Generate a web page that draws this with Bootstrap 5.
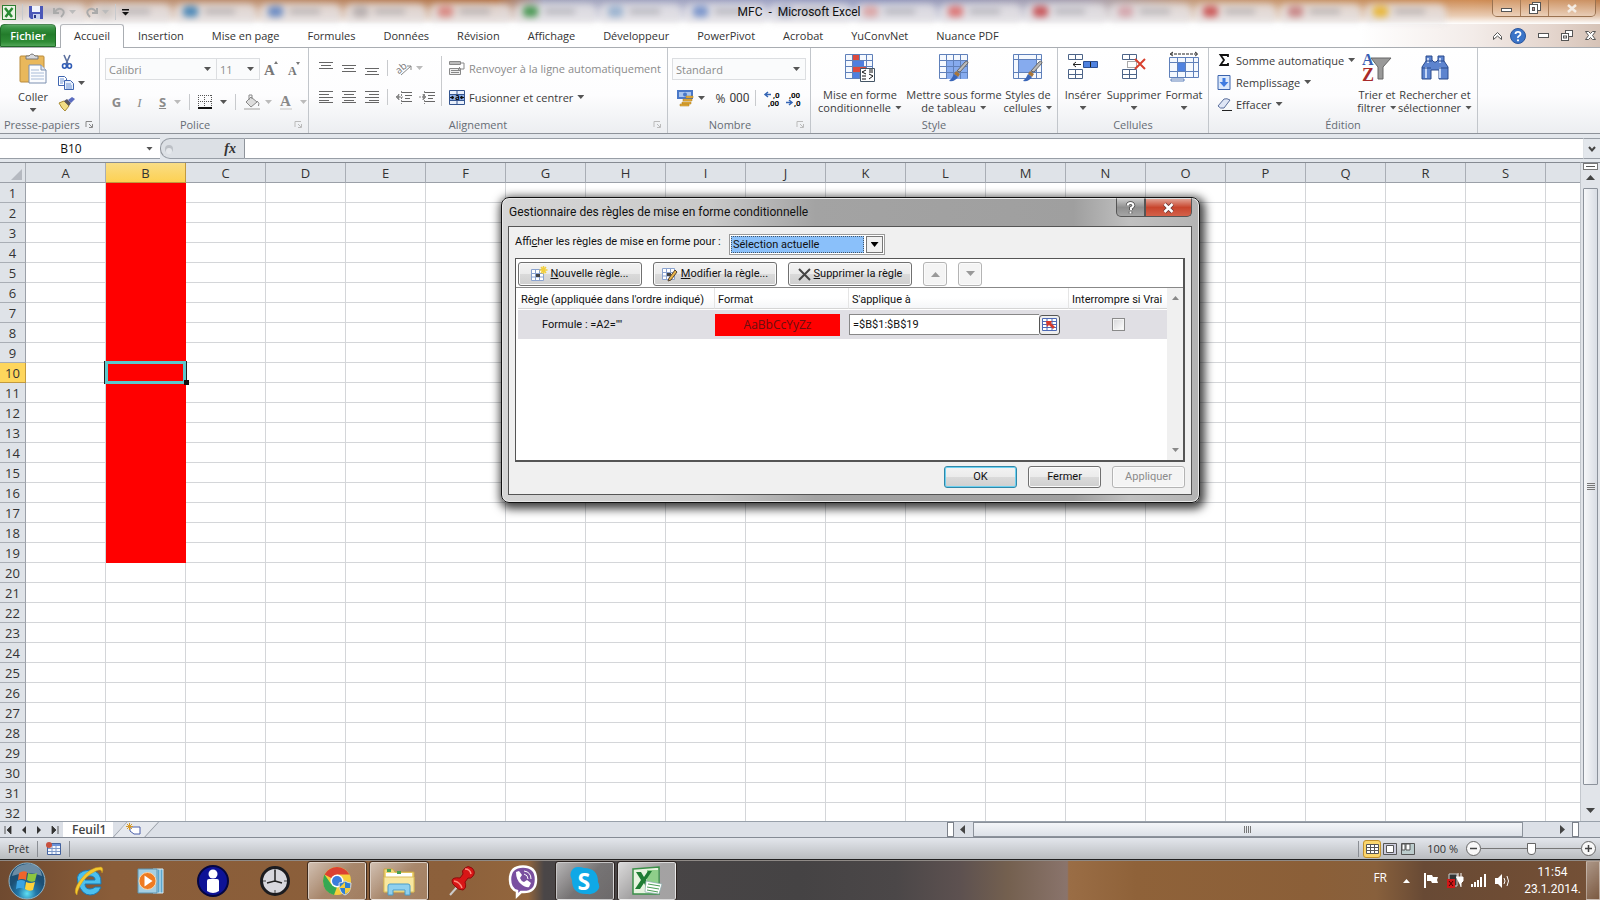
<!DOCTYPE html>
<html lang="fr">
<head>
<meta charset="utf-8">
<meta name="viewport" content="width=device-width, initial-scale=1">
<title>MFC - Microsoft Excel</title>
<link href="https://cdn.jsdelivr.net/npm/bootstrap@5.3.0/dist/css/bootstrap.min.css" rel="stylesheet">
<style>
body{font:11px/13px "Open Sans","Noto Sans",sans-serif;color:#333;background:#fff;overflow:hidden}
button{border:0;background:none;padding:0;color:inherit}
input,select{font:inherit;color:inherit;border-radius:0}
svg{display:block;flex:none;overflow:visible}
a{color:inherit;text-decoration:none}
.ar{width:7px;height:4px;background:#555;clip-path:polygon(0 0,100% 0,50% 100%);flex:none}
.ar.off{background:#bbb}
.vsep{width:1px;height:16px;background:#c8cacd;flex:none}
/* title bar */
.titlebar{height:24px;position:relative;background:
 linear-gradient(180deg,rgba(255,255,255,0),rgba(255,255,255,.3) 35%,rgba(255,255,255,.55) 65%,#fff),
 linear-gradient(90deg,#c8a88f 0,#bd9275 7%,#bd8d6b 18%,#b5764a 31%,#a3a5bd 34%,#9fa3c4 48%,#9298bd 55%,#a9a2b0 68%,#c69a78 75%,#c8905f 86%,#cf8d56 92%,#bd7a45 100%)}
.ghosts{position:absolute;inset:4px 0 1px 0;padding-left:5px;filter:blur(3px);overflow:hidden}
.ghosts i{display:block;width:81px;height:20px;border-radius:8px 8px 0 0;background:rgba(228,226,228,.75);position:relative;flex:none}
.ghosts i::before{content:"";position:absolute;left:8px;top:2px;width:15px;height:11px;background:var(--c);border-radius:4px}
.ghosts i::after{content:"";position:absolute;left:30px;top:5px;width:30px;height:5px;background:rgba(110,110,120,.35)}
.qat{gap:6px;padding:4px 0 0 2px}
.qat .pair{gap:4px}
.apptitle{font:12px/16px Roboto,sans-serif;color:#111;white-space:pre}
.winctl{border:1px solid #9a7250;border-top:0;border-radius:0 0 5px 5px;height:17px}
.winctl button{height:16px;width:28px;border-right:1px solid #a87c58;background:rgba(255,235,215,.2)}
.winctl button:last-child{width:46px;border:0}
/* ribbon tabs */
.tabsrow{height:24px;border-bottom:1px solid #a9adb2;background:linear-gradient(90deg,#fff 0,#fff 85%,#f3ece9 92%,#e4d5cd 97%,#d6c3b7)}
.tabsrow .file{width:56px;margin-right:4px;background:linear-gradient(#3f9c4b,#237c2b 45%,#2f8c36 80%,#51a658);color:#fff;border-radius:4px 4px 0 0;border:1px solid #1f6b27;font-weight:600}
.tabsrow a{padding:0 14px;height:24px;line-height:23px}
.tabsrow a.on{background:#fff;border:1px solid #a9adb2;border-bottom:0;border-radius:3px 3px 0 0;padding:0 13px;line-height:22px}
/* ribbon */
.ribbon{height:86px;border-bottom:1px solid #8d9299;background:linear-gradient(#fff,#fdfdfe 55%,#eceef1)}
.grp{border-right:1px solid #c2c6cb;display:flex;flex-direction:column;flex:none;height:85px}
.grp>.gbody{height:69px;display:flex}
.grp>.glab{height:16px;text-align:center;position:relative;color:#666c74;line-height:15px}
.glab svg{position:absolute;right:6px;top:4px}
.big{display:flex;flex-direction:column;align-items:center;padding-top:5px;white-space:nowrap}
.big svg{margin-bottom:6px}
.big .ar{margin-top:5px}
.big span{line-height:13px}
.big .dl{display:flex;align-items:center;gap:4px}
.big .dl .ar{margin:0}
.slot{display:inline-flex;align-items:center;justify-content:center;height:20px;flex:none}
.w15{width:15px}.w23{width:23px}.w17{width:17px}
.cbo{border:1px solid #dcdee1;background:#fafbfc;height:22px;display:flex;align-items:center;color:#8b8b8b;position:relative}
.cbo select{appearance:none;border:0;background:none;padding:0 3px;width:100%;outline:0;color:#8b8b8b;opacity:1}
.cbo .ar{position:absolute;right:5px}
.rowline{height:20px;display:flex;align-items:center}
.off{color:#8b8b8b}
.big,.grp button{color:#3b3b3b}.grp button.off{color:#8b8b8b}
/* formula bar */
.fbar{height:28px;background:#e3e7ec;padding:4px 0 3px;font-size:12px}
.fbar>*{border-top:1px solid #989ea6;border-bottom:1px solid #989ea6;height:21px}
.namebox{width:160px;background:#fff;position:relative}
.namebox input{border:0;width:142px;text-align:center;outline:0;background:none;color:#111}
.fxzone{width:85px;background:#dce0e5;border-right:1px solid #8f949b;border-left:1px solid #8f949b;border-radius:10px 0 0 10px}
/* sheet */
.gridwrap{overflow:hidden;border-top:1px solid #868b92}
.cells{table-layout:fixed;border-collapse:separate;border-spacing:0;width:1626px;font-size:12px;line-height:18px;color:#333}
.cells td,.cells th{height:20px;padding:0;border-right:1px solid #d4d6d9;border-bottom:1px solid #d4d6d9;font-weight:400;text-align:center;position:relative}
.cells thead th{background:#dfe3e8;border-color:#9ba0a8;border-right-color:#a9aeb5;font-size:13px}
.cells tbody th{background:#dfe3e8;border-color:#a9aeb5;border-right-color:#9ba0a8;font-size:13px}
.cells thead th.act{background:linear-gradient(#f9dd85,#fdd153);border-color:#c29a3e}
.cells tbody th.act{background:#fed65c;border-color:#c29a3e}
.cells .red{background:#f00;border-color:#f00}
.cells .cur::after{content:"";position:absolute;inset:-2px -1px -2px -1px;border:3px solid #5cc8cc;box-shadow:-1px 0 #222,1px 0 #222;z-index:1}
.cells .cur::before{content:"";position:absolute;right:-4px;bottom:-3px;width:5px;height:5px;background:#111;z-index:2}
.vbar{width:20px;background:#e1e4e9;border-left:1px solid #c3c7cd;border-top:1px solid #868b92;font-size:0}
.vthumb{width:15px;border:1px solid #8c929b;border-radius:1px;background:linear-gradient(90deg,#f6f7f9,#d9dde4)}
.grips{width:8px;height:8px;background:repeating-linear-gradient(#777 0 1px,transparent 1px 2px)}
/* sheet tabs and status */
.sheets{height:17px;border-top:1px solid #98a0aa;border-bottom:1px solid #858b95;background:#dce0e7}
.sheettab{width:50px;background:#fff;font-size:12px;font-weight:600;line-height:15px;padding-left:9px;color:#444}
.newtab{width:46px;clip-path:polygon(30% 0,100% 0,70% 100%,0 100%);background:#8e949d;position:relative}
.newtab b{position:absolute;inset:0;background:#e6e9ee;clip-path:polygon(31% 0,98% 0,68% 100%,2% 100%)}
.newtab svg{position:relative;margin-left:13px}
.hthumb{width:550px;border:1px solid #8c929b;background:linear-gradient(#f3f5f8,#dde1e8)}
.hgrips{width:8px;height:7px;background:repeating-linear-gradient(90deg,#777 0 1px,transparent 1px 2px)}
.splitter{width:7px;background:#fff;border:1px solid #7c818a;height:15px}
.status{height:22px;background:linear-gradient(#e3e6ec,#c6c9cd 70%,#b9bcbf);border-bottom:1px solid #222;color:#333}
.status .vsep{background:#8a8e94}
.viewb{width:18px;height:18px;display:flex;align-items:center;justify-content:center}
.viewb.on{background:#fbd66c;border:1px solid #c2912d;border-radius:3px}
.zoomr{appearance:none;width:100px;height:16px;background:linear-gradient(#777,#777) center/100% 1px no-repeat;margin:0}
.zoomr::-webkit-slider-thumb{appearance:none;width:9px;height:12px;background:#fff;border:1px solid #666;border-radius:1px 1px 5px 5px}
.zb{width:15px;height:15px;border:1px solid #666;border-radius:50%;background:#f8f8f8;display:flex;align-items:center;justify-content:center}
/* taskbar */
.taskbar{height:40px;border-top:1px solid #8f8a86;background:
 linear-gradient(90deg,#6f4a30 0,#8a5d39 7%,#8c603b 28%,#93663d 33%,#4a4647 34%,#454344 50%,#4b4748 56%,#5d5150 60%,#74604f 63%,#8a746c 66.7%,#9a6d45 66.8%,#8f6239 71%,#8b5f38 82%,#88603c 86%,#684a35 89%,#6e4c34 94%,#755137 100%)}
.tk{width:62px;display:flex;align-items:center;justify-content:center}
.tk.start{width:58px;padding-right:4px}
.tk span{width:58px;height:38px;display:flex;align-items:center;justify-content:center}
.tk.run span{border:1px solid rgba(255,255,255,.6);outline:1px solid rgba(30,20,15,.7);border-radius:2px;background:linear-gradient(135deg,rgba(255,255,255,.6),rgba(255,255,255,.25) 50%,rgba(255,255,255,.2))}
.tk.act span{background:linear-gradient(135deg,rgba(255,255,255,.8),rgba(255,255,255,.5) 50%,rgba(255,255,255,.5))}
.tray{color:#fff;font-size:12px}
.desk{width:14px;border:1px solid rgba(255,255,255,.4);background:linear-gradient(135deg,rgba(255,255,255,.4),rgba(255,255,255,.05))}
/* dialog floats over the sheet */
.rulesdlg{position:absolute;left:501px;top:197px;width:699px;border:1px solid #111;border-radius:8px;padding:0 7px 7px 6px;box-shadow:2px 3px 10px 3px rgba(0,0,0,.75),inset 0 0 0 1px #e8e8e8;
 background:linear-gradient(90deg,#d6d6d6 0,#c9c9c9 30%,#a3a3a3 45%,#9f9f9f 82%,#c0c0c0 90%,#b4b4b4);font:11px/14px Roboto,"Noto Sans",sans-serif;color:#111;z-index:5}
.dlghead{height:28px;padding-left:1px;font-size:12px}
.dlghead .hx{align-self:flex-start;border:1px solid #555;border-top-color:#ddd;height:19px;display:flex;align-items:center;justify-content:center}
.hx.q{width:29px;border-radius:0 0 0 5px;background:linear-gradient(#c9c9c9,#8f8f8f 50%,#a5a5a5)}
.hx.x{width:47px;border-radius:0 0 5px 0;background:linear-gradient(#e2a193,#c8452d 50%,#d4614a)}
.dlgbody{background:#f0f0f0;border:1px solid #555;height:269px;padding:7px 6px 0}
.dlgbody label{width:214px;padding-top:1px}
.selcbo{width:156px;height:21px;border:1px solid #9a9a9a;background:#fff;padding:1px;position:relative}
.selcbo select{appearance:none;width:134px;height:17px;background:#8ac0fa;border:1px dotted #456;padding:0 0 0 1px;line-height:14px;outline:0;color:#111}
.selcbo .dd{width:17px;height:17px;border:1px solid #777;background:#f1f1f1;margin-left:2px}
.selcbo .ar{background:#000;width:8px;height:5px}
.rulebox{border:1px solid #555;border-right-width:2px;border-bottom-width:2px;background:#fff;height:204px}
.rbar{height:29px;padding:3px 0 0 2px;gap:11px;border-bottom:1px solid #888}
.w7{border:1px solid #707070;border-radius:3px;background:linear-gradient(#f3f3f3,#ebebeb 50%,#dadada 51%,#cfcfcf);height:24px;color:#111;display:flex;align-items:center;justify-content:center;gap:3px;box-shadow:inset 0 0 0 1px #fbfbfb}
.w7.dis{border-color:#b4b4b4;background:#f4f4f4;color:#8b8b8b}
.w7.f73{width:73px;height:22px}.w7.f124{width:124px}.w7.f24{width:24px}
.w7.def{border-color:#2f87a8;box-shadow:inset 0 0 0 1px #6cd0f0}
.rules{table-layout:fixed;width:649px;margin-left:2px;border-collapse:separate;border-spacing:0}
.rules th{font-weight:400;height:21px;border-bottom:1px solid #d5d5d5;border-right:1px solid #e5e5e5;padding:3px 3px 0 3px;background:linear-gradient(#fff 50%,#f5f6f8);white-space:nowrap}
.rules td{height:30px;background:#e0dfe4;padding:0;border-top:1px solid #fff}
.sample{background:#f00;color:#6a1010;height:22px;width:125px;font:12px/22px "Open Sans",sans-serif;text-align:center}
.refin{width:190px;height:21px;border:1px solid #888;border-right:0;padding:0 3px;background:#fff;outline:0}
.refb{width:21px;height:20px;border:1px solid #555;border-radius:3px;background:#eee;display:flex;align-items:center;justify-content:center}
.rules input[type=checkbox]{appearance:none;width:13px;height:13px;border:1px solid #8a8a8a;background:linear-gradient(135deg,#d5d5d8,#fff);box-shadow:inset 0 0 0 1px #f5f5f5;margin:0;display:block}
.rscroll{width:17px;background:#f0f0f0}
</style>
</head>
<body class="vh-100 d-flex flex-column">

<header class="titlebar d-flex align-items-start justify-content-between flex-shrink-0">
  <div class="ghosts d-flex gap-1" id="ghosts" aria-hidden="true"></div>
  <div class="qat col d-flex align-items-center position-relative">
    <svg width="14" height="15" viewBox="0 0 14 15"><rect x=".5" y=".5" width="13" height="14" fill="#e9f4e4" stroke="#2d7d32"/><path d="M3 3l7 9M10.500 3L3.500 12" stroke="#2a8a33" stroke-width="2.500"/></svg>
    <span class="vsep"></span>
    <button aria-label="Enregistrer"><svg width="14" height="14" viewBox="0 0 14 14"><path d="M0 1h14v13H2L0 12z" fill="#4a57b8"/><path d="M3 1h8v6H3z" fill="#f0f3fb"/><path d="M4 9h7v5H4z" fill="#c9d2ee"/><path d="M5 10h2v3H5z" fill="#2b3585"/></svg></button>
    <button class="pair d-flex align-items-center ms-1" aria-label="Annuler"><svg width="12" height="11" viewBox="0 0 12 11"><path d="M1 1v5h5M1.500 5.500Q5 0 9 2.500T8 10" fill="none" stroke="#aaa" stroke-width="2"/></svg><i class="ar off"></i></button>
    <button class="pair d-flex align-items-center ms-1" aria-label="Rétablir"><svg width="12" height="11" viewBox="0 0 12 11"><path d="M11 1v5H6M10.500 5.500Q7 0 3 2.500T4 10" fill="none" stroke="#aaa" stroke-width="2"/></svg><i class="ar off"></i></button>
    <span class="vsep"></span>
    <button aria-label="Personnaliser"><svg width="7" height="7" viewBox="0 0 7 7"><path d="M0 0h7v1.500H0zM0 3h7L3.500 6.500z" fill="#111"/></svg></button>
  </div>
  <div class="apptitle position-relative pt-1">MFC  -  Microsoft Excel</div>
  <div class="col d-flex justify-content-end position-relative pe-1">
    <div class="winctl d-flex">
      <button class="slot" aria-label="Réduire"><svg width="11" height="10" viewBox="0 0 11 10"><rect x=".5" y="5.500" width="10" height="3" fill="#fff" stroke="#555"/></svg></button>
      <button class="slot" aria-label="Restaurer"><svg width="12" height="12" viewBox="0 0 12 12"><rect x="3.500" y=".5" width="8" height="8" fill="#fff" stroke="#555"/><rect x=".5" y="2.500" width="8" height="9" fill="#fff" stroke="#555"/><rect x="3.500" y="5.500" width="2" height="3" fill="#c99" stroke="#555"/></svg></button>
      <button class="slot" aria-label="Fermer"><svg width="10" height="9" viewBox="0 0 10 9"><path d="M1 1l8 7M9 1L1 8" stroke="#f4ece4" stroke-width="2.500"/></svg></button>
    </div>
  </div>
</header>

<nav class="tabsrow d-flex flex-shrink-0">
  <button class="file">Fichier</button>
  <a href="#" class="on">Accueil</a><a href="#">Insertion</a><a href="#">Mise en page</a><a href="#">Formules</a><a href="#">Données</a><a href="#">Révision</a><a href="#">Affichage</a><a href="#">Développeur</a><a href="#">PowerPivot</a><a href="#">Acrobat</a><a href="#">YuConvNet</a><a href="#">Nuance PDF</a>
  <div class="ms-auto d-flex align-items-center gap-2 pe-1">
    <button aria-label="Réduire le ruban"><svg width="9" height="8" viewBox="0 0 9 8"><path d="M.5 4.500l4-4 4 4v3l-4-3.500-4 3.500z" fill="#fff" stroke="#555"/></svg></button>
    <button aria-label="Aide"><svg width="16" height="16" viewBox="0 0 16 16"><circle cx="8" cy="8" r="7.500" fill="#3b74c8" stroke="#2a559c"/><path d="M5.500 6Q5.500 3.800 8 3.800T10.500 6Q10.500 7.200 9 8T8 10" fill="none" stroke="#fff" stroke-width="1.800"/><circle cx="8" cy="12.300" r="1.100" fill="#fff"/></svg></button>
    <button class="mx-1" aria-label="Réduire le classeur"><svg width="11" height="5" viewBox="0 0 11 5"><rect x=".5" y=".5" width="10" height="4" fill="#fff" stroke="#555"/></svg></button>
    <button aria-label="Restaurer le classeur"><svg width="12" height="11" viewBox="0 0 12 11"><rect x="4.500" y=".5" width="7" height="6" fill="#fff" stroke="#555"/><rect x=".5" y="3.500" width="7" height="7" fill="#fff" stroke="#555"/><rect x="2.500" y="6" width="3" height="2" fill="none" stroke="#555"/></svg></button>
    <button class="ms-1" aria-label="Fermer le classeur"><svg width="11" height="9" viewBox="0 0 11 9"><path d="M.5.5h3l2 2 2-2h3l-3 4 3 4h-3l-2-2-2 2h-3l3-4z" fill="#fff" stroke="#555"/></svg></button>
  </div>
</nav>

<section class="ribbon d-flex flex-shrink-0">
  <!-- Presse-papiers -->
  <div class="grp" style="width:100px">
    <div class="gbody">
      <button class="big ps-2" style="width:58px"><svg width="28" height="31" viewBox="0 0 28 31"><rect x="1" y="3" width="24" height="26" rx="1" fill="#e9b85c" stroke="#b98a3a"/><path d="M7 6h12V3h-3Q13-1 10 3H7z" fill="#d8dade" stroke="#777"/><path d="M10 12h12l5 5v13H10z" fill="#fbfcfe" stroke="#7a8fb0"/><path d="M22 12v5h5" fill="#dfe6f2" stroke="#7a8fb0"/><path d="M12 17h8M12 20h13M12 23h13M12 26h13" stroke="#a9bcd8"/></svg><span>Coller</span><i class="ar"></i></button>
      <div class="d-flex flex-column pt-1">
        <button class="slot w17" aria-label="Couper"><svg width="10" height="14" viewBox="0 0 10 14"><path d="M2 0l4 9M8 0L4 9" stroke="#5a6f9e" stroke-width="1.600"/><ellipse cx="2.500" cy="11" rx="2" ry="2.200" fill="none" stroke="#2f5bb5" stroke-width="1.600"/><ellipse cx="7.500" cy="11" rx="2" ry="2.200" fill="none" stroke="#2f5bb5" stroke-width="1.600"/></svg></button>
        <button class="d-flex align-items-center mt-1" aria-label="Copier"><svg width="16" height="14" viewBox="0 0 16 14"><path d="M.5.5h6l2 2v7h-8z" fill="#fff" stroke="#3f65b0"/><path d="M6.500 4.500h6l3 3v6h-9z" fill="#e8f0fc" stroke="#3f65b0"/><path d="M2 3h4M2 5h4M2 7h3M8 8h5M8 10h6M8 12h6" stroke="#6d93d4"/></svg><i class="ar ms-1"></i></button>
        <button class="slot w17 mt-1" aria-label="Reproduire la mise en forme"><svg width="16" height="14" viewBox="0 0 16 14"><path d="M0 6l5-2 5 5-4 5q-3-2-6-8z" fill="#f1dd84" stroke="#a88b35"/><path d="M5 4l3-2 4 4-2 3z" fill="#556"/><path d="M9 3l4-3 3 2-4 4z" fill="#5a6cc0"/></svg></button>
      </div>
    </div>
    <div class="glab text-start ps-1">Presse-papiers<svg width="7" height="7" viewBox="0 0 7 7"><path d="M0 6V.5h6M3 3l3 3M6.500 3v3.500H3" fill="none" stroke="#888"/></svg></div>
  </div>
  <!-- Police -->
  <div class="grp" style="width:209px">
    <div class="gbody flex-column" style="padding-left:5px">
      <div class="d-flex" style="padding-top:10px">
        <div class="cbo" style="width:112px"><select aria-label="Police" disabled><option>Calibri</option></select><i class="ar"></i></div>
        <div class="cbo border-start-0" style="width:43px"><select aria-label="Taille" disabled><option>11</option></select><i class="ar"></i></div>
        <button class="slot w23" aria-label="Agrandir"><svg width="15" height="15" viewBox="0 0 15 15"><text x="0" y="14" font-family="Liberation Serif" font-weight="bold" font-size="15" fill="#777">A</text><path d="M10 3l2-3 2 3z" fill="#777"/></svg></button>
        <button class="slot w23" aria-label="Réduire la police"><svg width="13" height="15" viewBox="0 0 13 15"><text x="0" y="14" font-family="Liberation Serif" font-weight="bold" font-size="12" fill="#777">A</text><path d="M8 1h4l-2 3z" fill="#777"/></svg></button>
      </div>
      <div class="rowline off" style="padding-top:12px;height:32px;font-size:13px">
        <button class="slot w23 off fw-bold">G</button><button class="slot w23 off fst-italic" style="font-family:'Liberation Serif'">I</button><button class="slot w23 off fw-bold text-decoration-underline">S</button><i class="ar off me-2"></i><span class="vsep"></span>
        <button class="d-flex align-items-center gap-2 mx-2" aria-label="Bordures"><svg width="14" height="14" viewBox="0 0 14 14"><path d="M.5 0v13M6.500 0v13M13.500 0v13M0 .5h14M0 6.500h14" stroke="#555" stroke-dasharray="1 1"/><path d="M0 13h14" stroke="#111" stroke-width="2"/></svg><i class="ar"></i></button><span class="vsep"></span>
        <button class="d-flex align-items-center gap-1 ms-2" aria-label="Couleur de remplissage"><svg width="17" height="15" viewBox="0 0 17 15"><path d="M2 7l5-5 6 5-6 5z" fill="#ddd" stroke="#888"/><path d="M5 5V0h3v4M13 6q3 2 1.500 5" fill="none" stroke="#888"/><path d="M0 14h16" stroke="#ccc" stroke-width="2"/></svg><i class="ar off"></i></button>
        <button class="d-flex align-items-center gap-2 ms-2" aria-label="Couleur de police"><svg width="12" height="15" viewBox="0 0 12 15"><text x="0" y="11" font-family="Liberation Serif" font-weight="bold" font-size="15" fill="#888">A</text><path d="M0 14h12" stroke="#ddd" stroke-width="2"/></svg><i class="ar off"></i></button>
      </div>
    </div>
    <div class="glab" style="padding-right:18px">Police<svg width="7" height="7" viewBox="0 0 7 7"><path d="M0 6V.5h6M3 3l3 3M6.500 3v3.500H3" fill="none" stroke="#bbb"/></svg></div>
  </div>
  <!-- Alignement -->
  <div class="grp" style="width:359px">
    <div class="gbody" style="padding-left:9px">
      <div class="d-flex flex-column" style="padding-top:10px;gap:9px;width:123px">
        <div class="rowline">
          <button class="slot w15 me-2" aria-label="Haut"><svg width="14" height="13" viewBox="0 0 14 13"><path d="M0 .5h14M2 3.500h10M0 6.500h14" stroke="#666"/></svg></button>
          <button class="slot w15 me-2" aria-label="Milieu"><svg width="14" height="13" viewBox="0 0 14 13"><path d="M0 3.500h14M2 6.500h10M0 9.500h14" stroke="#666"/></svg></button>
          <button class="slot w15 me-2" aria-label="Bas"><svg width="14" height="13" viewBox="0 0 14 13"><path d="M0 6.500h14M2 9.500h10M0 12.500h14" stroke="#666"/></svg></button><span class="vsep"></span>
          <button class="d-flex align-items-center gap-1 ms-2" aria-label="Orientation"><svg width="16" height="14" viewBox="0 0 16 14"><text x="0" y="10" font-family="Open Sans" font-size="10" fill="#777" transform="rotate(-40 6 8)">ab</text><path d="M5 14L15 5M15 9V5h-4" fill="none" stroke="#888"/></svg><i class="ar off"></i></button>
        </div>
        <div class="rowline">
          <button class="slot w15 me-2" aria-label="Gauche"><svg width="14" height="12" viewBox="0 0 14 12"><path d="M0 .5h14M0 3.500h10M0 6.500h14M0 9.500h10M0 11.500h14" stroke="#666"/></svg></button>
          <button class="slot w15 me-2" aria-label="Centrer"><svg width="14" height="12" viewBox="0 0 14 12"><path d="M0 .5h14M2 3.500h10M0 6.500h14M2 9.500h10M0 11.500h14" stroke="#666"/></svg></button>
          <button class="slot w15 me-2" aria-label="Droite"><svg width="14" height="12" viewBox="0 0 14 12"><path d="M0 .5h14M4 3.500h10M0 6.500h14M4 9.500h10M0 11.500h14" stroke="#666"/></svg></button><span class="vsep"></span>
          <button class="slot w15 ms-2" aria-label="Diminuer le retrait"><svg width="16" height="13" viewBox="0 0 16 13"><path d="M5 1.500h11M9 4.500h7M9 7.500h5M5 10.500h11" stroke="#666"/><path d="M0 6l3-3v6zM3 6h4M5.500 0v13" stroke="#888" fill="#888" stroke-dasharray="2 1"/></svg></button>
          <button class="slot w15 ms-2" aria-label="Augmenter le retrait"><svg width="16" height="13" viewBox="0 0 16 13"><path d="M5 1.500h11M9 4.500h7M9 7.500h5M5 10.500h11" stroke="#666"/><path d="M7 6L4 3v6zM0 6h4M5.500 0v13" stroke="#888" fill="#888" stroke-dasharray="2 1"/></svg></button>
        </div>
      </div>
      <span class="vsep my-2" style="height:50px"></span>
      <div class="d-flex flex-column" style="padding:10px 0 0 7px;gap:9px">
        <button class="rowline off gap-1 text-nowrap"><svg width="16" height="16" viewBox="0 0 16 16"><path d="M.5 1.500h11v3H.5zM.5 8.500h11v6H.5z" fill="#eee" stroke="#888"/><path d="M2 10.500h8M2 12.500h8M0 3h15v6M11 7l-2 2 2 2M9 9h6" fill="none" stroke="#888"/></svg>Renvoyer à la ligne automatiquement</button>
        <button class="rowline gap-1 text-nowrap"><svg width="16" height="15" viewBox="0 0 16 15"><path d="M.5.5h15v14H.5z" fill="#e9f0fb" stroke="#34558f"/><path d="M0 4.500h16M0 10.500h16M8 0v4M8 11v4" stroke="#34558f"/><path d="M1 5h14v5H1z" fill="#8db0ea"/><path d="M1 7.500h3M12 7.500h3M3 6l2 1.500L3 9zM13 6l-2 1.500L13 9z" stroke="#111" fill="#111"/><text x="6" y="10" font-size="8" font-weight="bold">a</text></svg>Fusionner et centrer<i class="ar"></i></button>
      </div>
    </div>
    <div class="glab" style="padding-right:20px">Alignement<svg width="7" height="7" viewBox="0 0 7 7"><path d="M0 6V.5h6M3 3l3 3M6.500 3v3.500H3" fill="none" stroke="#bbb"/></svg></div>
  </div>
  <!-- Nombre -->
  <div class="grp" style="width:143px">
    <div class="gbody flex-column px-1" style="padding-top:10px;gap:8px">
      <div class="cbo"><select aria-label="Format de nombre" disabled><option>Standard</option></select><i class="ar"></i></div>
      <div class="rowline" style="padding-left:5px">
        <button class="d-flex align-items-center gap-1" aria-label="Format comptable"><svg width="17" height="16" viewBox="0 0 17 16"><path d="M0 0h16v9H0z" fill="#4a78c8"/><path d="M2 2h12v5H2z" fill="#a8c4ee"/><circle cx="8" cy="4.500" r="2" fill="#4a78c8"/><path d="M6 9h9v2H6zM5 12h9v2H5zM9 6h7v2H9zM3 14h9v2H3z" fill="#e9b03c" stroke="#a87818" stroke-width=".5"/></svg><i class="ar"></i></button>
        <button class="slot ms-2 w15" style="font-size:12px">%</button><button class="slot w23" style="font:12px 'Roboto'">000</button><span class="vsep mx-1"></span>
        <button class="slot w17 ms-1" aria-label="Ajouter une décimale"><svg width="16" height="15" viewBox="0 0 16 15"><path d="M0 3.500h6M3 1L0 3.500 3 6" fill="none" stroke="#3465b5" stroke-width="1.500"/><text x="8" y="7" font-size="8" font-weight="bold" font-family="Roboto">,0</text><text x="3" y="15" font-size="8" font-weight="bold" font-family="Roboto">,00</text></svg></button>
        <button class="slot w17 ms-1" aria-label="Réduire les décimales"><svg width="16" height="15" viewBox="0 0 16 15"><path d="M0 11.500h6M3 9l3 2.500L3 14" fill="none" stroke="#3465b5" stroke-width="1.500"/><text x="3" y="7" font-size="8" font-weight="bold" font-family="Roboto">,00</text><text x="8" y="15" font-size="8" font-weight="bold" font-family="Roboto">,0</text></svg></button>
      </div>
    </div>
    <div class="glab" style="padding-right:18px">Nombre<svg width="7" height="7" viewBox="0 0 7 7"><path d="M0 6V.5h6M3 3l3 3M6.500 3v3.500H3" fill="none" stroke="#bbb"/></svg></div>
  </div>
  <!-- Style -->
  <div class="grp" style="width:247px">
    <div class="gbody justify-content-between px-1">
      <button class="big" style="width:90px"><svg width="30" height="29" viewBox="0 0 30 29"><path d="M.5 1.500h27v24H.5z" fill="#f4f8fe" stroke="#5f80ba"/><path d="M0 7.500h28M0 13.500h28M0 19.500h28M7.500 1v25M14.500 1v25M21.500 1v25" stroke="#5f80ba"/><path d="M8 2h6v5H8zM8 14h13v5H8z" fill="#dc4a3e"/><path d="M8 8h11v5H8zM8 20h6v5H8z" fill="#4f7fe0"/><path d="M15.500 15.500h14v13h-14z" fill="#fff" stroke="#456"/><path d="M21 17l-4 2 4 2M17 23h4M17 26h4M24 17h4M24 19h4M24 21l4 2-4 3" fill="none" stroke="#111"/></svg><span>Mise en forme</span><span class="dl">conditionnelle<i class="ar"></i></span></button>
      <button class="big" style="width:98px"><svg width="30" height="29" viewBox="0 0 30 29"><path d="M.5 1.500h28v24H.5z" fill="#f4f8fe" stroke="#5f80ba"/><path d="M8 8h20v18H8z" fill="#86abee"/><path d="M0 7.500h28M0 13.500h28M0 19.500h28M7.500 1v25M14.500 1v25M21.500 1v25" stroke="#5f80ba"/><path d="M29 10l-8 9-3-1 8-9q3-2 3 1z" fill="#bbb" stroke="#666"/><path d="M17 18l4 3-2 3-4-3z" fill="#a8763a"/><path d="M15 21l4 3q-3 5-9 4 3-2 5-7z" fill="#3a66b8"/></svg><span>Mettre sous forme</span><span class="dl">de tableau<i class="ar"></i></span></button>
      <button class="big" style="width:50px"><svg width="30" height="29" viewBox="0 0 30 29"><path d="M.5 1.500h28v24H.5z" fill="#f4f8fe" stroke="#5f80ba"/><path d="M0 6.500h28M0 19.500h28M5.500 1v25M23.500 1v25" stroke="#5f80ba"/><path d="M6 7h17v12H6z" fill="#86abee"/><path d="M29 10l-8 9-3-1 8-9q3-2 3 1z" fill="#bbb" stroke="#666"/><path d="M17 18l4 3-2 3-4-3z" fill="#a8763a"/><path d="M15 21l4 3q-3 5-9 4 3-2 5-7z" fill="#3a66b8"/></svg><span>Styles de</span><span class="dl">cellules<i class="ar"></i></span></button>
    </div>
    <div class="glab">Style</div>
  </div>
  <!-- Cellules -->
  <div class="grp" style="width:151px">
    <div class="gbody">
      <button class="big" style="width:50px"><svg width="30" height="29" viewBox="0 0 30 29"><path d="M.5 1.500h14v5H.5zM.5 16.500h14v9H.5zM7.500 1v5M7.500 16v10M0 21.500h15" fill="#fff" stroke="#4d6488"/><path d="M15.500 8.500h14v6h-14z" fill="#4f82e0" stroke="#2c4f94"/><path d="M22.500 9v5M5 11.500h8M8 9l-3 2.500L8 14" fill="none" stroke="#222"/></svg><span>Insérer</span><i class="ar"></i></button>
      <button class="big" style="width:52px"><svg width="26" height="29" viewBox="0 0 26 29"><path d="M1.500 1.500h14v5h-14zM1.500 16.500h14v9h-14zM8.500 1v5M8.500 16v10M1 21.500h15" fill="#fff" stroke="#4d6488"/><path d="M6.500 8.500h9v6h-9z" fill="none" stroke="#555" stroke-dasharray="1 1"/><path d="M14 6l10 10M24 6L14 16" stroke="#d8402e" stroke-width="2"/></svg><span>Supprimer</span><i class="ar"></i></button>
      <button class="big" style="width:48px"><svg width="30" height="29" viewBox="0 0 30 29"><path d="M.5 4.500h29v20H.5z" fill="#f4f8fe" stroke="#5f80ba"/><path d="M0 9.500h30M0 18.500h30M8.500 4v21M16.500 4v21M24.500 4v21" stroke="#5f80ba"/><path d="M9 10h7v8H9z" fill="#4f82e0"/><path d="M1 1h28M4-1L1 1l3 2M26-1l3 2-3 2" fill="none" stroke="#222" stroke-dasharray="3 1"/><path d="M2 26h13v2H2z" fill="#fff" stroke="#5f80ba"/></svg><span>Format</span><i class="ar"></i></button>
    </div>
    <div class="glab">Cellules</div>
  </div>
  <!-- Édition -->
  <div class="grp" style="width:269px">
    <div class="gbody ps-2">
      <div class="d-flex flex-column text-nowrap" style="width:140px;padding-top:2px;gap:2px">
        <button class="rowline gap-1"><svg width="15" height="12" viewBox="0 0 15 12"><path d="M11 3V1H3.500L7 6l-3.500 5H11V9" fill="none" stroke="#111" stroke-width="1.800"/></svg>Somme automatique<i class="ar"></i></button>
        <button class="rowline gap-1"><svg width="15" height="15" viewBox="0 0 15 15"><path d="M1 .5h12v14H1z" fill="#dbe8fb" stroke="#3c64ad"/><path d="M5.500 3h3v4h3L7 12 2.500 7h3z" fill="#3f7be0"/></svg>Remplissage<i class="ar"></i></button>
        <button class="rowline gap-1"><svg width="15" height="13" viewBox="0 0 15 13"><path d="M1 8l6-7q3-1 6 1l-6 8q-4 1-6-2z" fill="#dfe6f6" stroke="#5b6f9c"/><path d="M5 12.500h10" stroke="#222"/></svg>Effacer<i class="ar"></i></button>
      </div>
      <button class="big" style="width:40px"><svg width="30" height="29" viewBox="0 0 30 29"><text x="0" y="12" font-family="Liberation Serif" font-weight="bold" font-size="16" fill="#3860b4">A</text><text x="0" y="28" font-family="Liberation Serif" font-weight="bold" font-size="18" fill="#a82a2a">Z</text><path d="M9 5h20l-8 9v12h-5V14z" fill="#999" stroke="#666"/></svg><span>Trier et</span><span class="dl">filtrer<i class="ar"></i></span></button>
      <button class="big" style="width:76px"><svg width="28" height="29" viewBox="0 0 28 29"><path d="M5 3h6v4l2 2h2l2-2V3h6v5l4 6v12h-9v-9h-8v9H1V14l4-6z" fill="#5d84cf" stroke="#2b4a8c"/><path d="M5 14v11M19 14v11M7 5v5M19 5v5" stroke="#c5d6f5" stroke-width="2"/><path d="M1 15h9M18 15h9M5 8h6M17 8h6" stroke="#2b4a8c"/></svg><span>Rechercher et</span><span class="dl">sélectionner<i class="ar"></i></span></button>
    </div>
    <div class="glab">Édition</div>
  </div>
</section>

<section class="fbar d-flex flex-shrink-0">
  <div class="namebox d-flex align-items-center"><input aria-label="Zone Nom" value="B10"><i class="ar ms-1"></i></div>
  <div class="fxzone d-flex align-items-center justify-content-between px-1">
    <svg width="8" height="8" viewBox="0 0 8 8"><circle cx="4" cy="4" r="4" fill="#bcc0c6"/><circle cx="4" cy="6" r="3" fill="#e5e8ec"/></svg>
    <button class="pe-1" style="font:italic bold 14px/16px 'Liberation Serif',serif">fx</button>
  </div>
  <input class="flex-fill border-start-0 border-end-0 bg-white" aria-label="Barre de formule">
  <button class="px-1 border-start" aria-label="Développer"><svg width="8" height="6" viewBox="0 0 8 6"><path d="M1 1l3 3.500L7 1" fill="none" stroke="#444" stroke-width="2"/></svg></button>
</section>

<main class="d-flex flex-fill" style="min-height:0">
  <div class="gridwrap flex-fill"><table class="cells" id="cells"></table></div>
  <div class="vbar d-flex flex-column align-items-center flex-shrink-0 gap-1">
    <svg width="15" height="8" viewBox="0 0 15 8"><rect x=".5" y=".5" width="14" height="6" fill="#fff" stroke="#777"/><path d="M3 3.500h9" stroke="#555"/></svg>
    <svg class="mb-1" width="9" height="5" viewBox="0 0 9 5"><path d="M0 5l4.500-5L9 5z" fill="#444"/></svg>
    <div class="vthumb flex-fill d-flex align-items-center justify-content-center"><i class="grips"></i></div>
    <svg style="margin:19px 0 8px" width="9" height="5" viewBox="0 0 9 5"><path d="M0 0h9L4.500 5z" fill="#444"/></svg>
  </div>
</main>

<section class="sheets d-flex flex-shrink-0">
  <div class="d-flex align-items-center justify-content-between px-1" style="width:63px">
    <button aria-label="Première feuille"><svg width="8" height="8" viewBox="0 0 8 8"><path d="M1 0v8M7 0v8L3 4z" fill="#333" stroke="#333" stroke-width=".8"/></svg></button><button aria-label="Précédente"><svg width="6" height="8" viewBox="0 0 6 8"><path d="M5 0v8L1 4z" fill="#333"/></svg></button><button aria-label="Suivante"><svg width="6" height="8" viewBox="0 0 6 8"><path d="M1 0v8l4-4z" fill="#333"/></svg></button><button aria-label="Dernière feuille"><svg width="8" height="8" viewBox="0 0 8 8"><path d="M7 0v8M1 0v8l4-4z" fill="#333" stroke="#333" stroke-width=".8"/></svg></button>
  </div>
  <a href="#" class="sheettab">Feuil1</a>
  <button class="newtab" aria-label="Nouvelle feuille"><b></b><svg width="15" height="13" viewBox="0 0 15 13"><path d="M4 4h10v7H8l-4-3z" fill="#fff" stroke="#4a5fa8"/><path d="M3.500 0v7M0 3.500h7M1 1l5 5M6 1L1 6" stroke="#d79a28"/></svg></button>
  <div class="ms-auto d-flex">
    <i class="splitter"></i><svg class="align-self-center" style="margin-left:6px" width="5" height="9" viewBox="0 0 5 9"><path d="M5 0v9L0 4.500z" fill="#444"/></svg>
    <div class="hthumb ms-2 d-flex align-items-center justify-content-center"><i class="hgrips"></i></div>
    <svg class="align-self-center" style="margin:0 7px 0 37px" width="5" height="9" viewBox="0 0 5 9"><path d="M0 0v9l5-4.500z" fill="#444"/></svg><i class="splitter" style="margin-right:21px"></i>
  </div>
</section>

<footer class="status d-flex align-items-center flex-shrink-0 ps-2">
  <span>Prêt</span><span class="vsep mx-2"></span>
  <svg width="15" height="13" viewBox="0 0 15 13"><path d="M1.500 1.500h13v11h-13z" fill="#f4f7fd" stroke="#43629e"/><path d="M2 2h12v2H2z" fill="#6d93d8"/><path d="M2 6.500h12M2 9.500h12M6 4v8M10 4v8" stroke="#7d98c8"/><circle cx="3" cy="3" r="3" fill="#c8503e"/></svg>
  <span class="vsep mx-2"></span>
  <div class="ms-auto d-flex align-items-center">
    <span class="vsep me-1"></span>
    <button class="viewb on" aria-label="Normal"><svg width="13" height="10" viewBox="0 0 13 10"><path d="M.5.5h12v9H.5zM0 3.500h13M0 6.500h13M4.500 0v10M8.500 0v10" fill="#fff" stroke="#555"/></svg></button>
    <button class="viewb" aria-label="Mise en page"><svg width="14" height="12" viewBox="0 0 14 12"><path d="M.5.5h13v11H.5z" fill="#ccd" stroke="#555"/><path d="M3.500 2.500h7v7h-7z" fill="#fff" stroke="#555"/></svg></button>
    <button class="viewb" aria-label="Sauts de page"><svg width="14" height="12" viewBox="0 0 14 12"><path d="M.5.5h13v11H.5z" fill="#bcc" stroke="#555"/><path d="M1 1h3v6H1zM5 1h4v6H5z" fill="#fff" stroke="#555"/></svg></button>
    <button style="margin:0 8px 0 10px">100 %</button>
    <button class="zb" aria-label="Zoom arrière"><svg width="7" height="7" viewBox="0 0 7 7"><path d="M0 3.500h7" stroke="#444" stroke-width="1.500"/></svg></button>
    <input class="zoomr" type="range" aria-label="Zoom" value="50">
    <button class="zb me-1" aria-label="Zoom avant"><svg width="7" height="7" viewBox="0 0 7 7"><path d="M0 3.500h7M3.500 0v7" stroke="#444" stroke-width="1.500"/></svg></button>
  </div>
</footer>

<nav class="taskbar d-flex flex-shrink-0">
  <button class="tk start" aria-label="Démarrer"><svg width="38" height="38" viewBox="0 0 38 38"><defs><radialGradient id="orb" cy=".85"><stop offset="0" stop-color="#5fe0f5"/><stop offset=".5" stop-color="#2277a8"/><stop offset="1" stop-color="#1c4f74"/></radialGradient></defs><circle cx="19" cy="19" r="18" fill="url(#orb)" stroke="#8fb4c8"/><path d="M4 14Q6 3 19 2t15 12q-14-6-30 0z" fill="#fff" opacity=".35"/><path d="M11 11q4-3 8-1l-1 8q-4-2-8 0z" fill="#f0652c"/><path d="M20 11q4 2 9 0l-2 8q-4 2-8-1z" fill="#8cc63f"/><path d="M9 19q4-2 8 0l-1 8q-4-2-8 0z" fill="#3aa3e3"/><path d="M18 20q4 2 9 0l-2 8q-4 2-8-1z" fill="#ffd23a"/></svg></button>
  <button class="tk" aria-label="Internet Explorer"><svg width="32" height="32" viewBox="0 0 32 32"><path d="M28 19H12q0 5 5 5 3 0 5-2h6q-3 8-11 8T5 18 17 5q12 1 11 14zM12 15h10q0-4-5-4t-5 4z" fill="#4cc0ee" stroke="#1b79b5"/><path d="M4 30Q-1 26 8 14T28 2q3 1 1 6 0-5-6-2Q12 11 7 21 4 27 4 30z" fill="#f6c82e" stroke="#c99a18" stroke-width=".5"/></svg></button>
  <button class="tk" aria-label="Lecteur multimédia"><svg width="28" height="26" viewBox="0 0 28 26"><path d="M16 1h10v24H16z" fill="#5ea6cc" stroke="#d7eef9"/><path d="M20 1v24M23 1v24" stroke="#d7eef9"/><path d="M1 1h19v24H1z" fill="#a5cfe3" stroke="#5d94b0"/><circle cx="10.500" cy="13" r="8.500" fill="#ee7b22" stroke="#fbd5a8"/><path d="M7.500 7.500v11l8-5.500z" fill="#fff"/></svg></button>
  <button class="tk" aria-label="Utilisateur"><svg width="32" height="32" viewBox="0 0 32 32"><circle cx="16" cy="16" r="15" fill="#0d1296" stroke="#05063f" stroke-width="2"/><circle cx="16" cy="9" r="4.500" fill="#fff"/><path d="M10 16q0-2 2-2h8q2 0 2 2v10q-6 4-12 0z" fill="#fff"/></svg></button>
  <button class="tk" aria-label="Horloge"><svg width="32" height="32" viewBox="0 0 32 32"><circle cx="16" cy="16" r="13.500" fill="#d8d8de" stroke="#1c1c20" stroke-width="3"/><path d="M16 5v11L8 18M16 16l7 2" fill="none" stroke="#222" stroke-width="1.500"/><path d="M16 4v3M16 25v3M4 16h3M25 16h3" stroke="#444"/></svg></button>
  <button class="tk run" aria-label="Chrome"><span><svg width="30" height="30" viewBox="0 0 30 30"><circle cx="15" cy="15" r="14" fill="#f6cf3b"/><path d="M15 15L2.500 8.500Q7 1 15 1t12.500 7.500H15z" fill="#dc4132"/><path d="M2.500 8.500L9 18l6 3-3 8Q1 26 1 15q0-4 1.500-6.500z" fill="#35a853"/><circle cx="15" cy="15" r="6.500" fill="#fff"/><circle cx="15" cy="15" r="5" fill="#3b7ddd"/><path d="M23 15q-3 2-6 2 0 10 6 12 6-2 6-12-3 0-6-2z" fill="#2f7fd1" stroke="#ddd"/><path d="M23 16v6h-6M23 22v6q5-2 5.500-6z" fill="#f6cf3b"/></svg></span></button>
  <button class="tk run" aria-label="Explorateur"><span><svg width="32" height="30" viewBox="0 0 32 30"><path d="M1 3h9l2 3h19v20H1z" fill="#f2d878" stroke="#c9a544"/><path d="M3 7h26v5H3z" fill="#fff"/><path d="M4 3h4v3H4zM14 5h4v3h-4z" fill="#48a050"/><path d="M1 11h30v15H1z" fill="#f8e79f" stroke="#d9bb5c"/><path d="M5 29V20q0-2 2-2h18q2 0 2 2v9h-5v-5H10v5z" fill="#8fd0ee" stroke="#4a9cc8"/></svg></span></button>
  <button class="tk" aria-label="Épingle"><svg width="28" height="32" viewBox="0 0 28 32"><path d="M11 21L3 30" stroke="#ccc" stroke-width="2"/><path d="M5 16q0-4 8-3l3-4q-2-3 2-6 3-3 7 0 4 4 1 8-2 3-5 2l-3 4q2 6-2 8-5 0-8-4-3-2-3-5z" fill="#d81616" stroke="#8e0a0a"/><path d="M18 4q5 0 6 5M7 16q6 1 8 7" stroke="#ff8d7e" stroke-width="1.500" fill="none"/></svg></button>
  <button class="tk" aria-label="Viber"><svg width="30" height="32" viewBox="0 0 30 32"><path d="M15 1.500q13 0 13 13T15 27h-2l-4 4v-5Q2 24 2 14.500 2 1.500 15 1.500z" fill="#7a4fa0" stroke="#fff" stroke-width="2.500"/><path d="M8 7l3-1 3 4-2 3q1 3 4 4l3-2 4 3-2 4q-3 1-8-3T8 7z" fill="#fff"/><path d="M16 6q7 1 7 8M16 9q4 1 4 5" stroke="#fff" fill="none"/></svg></button>
  <button class="tk run" aria-label="Skype"><span><svg width="32" height="32" viewBox="0 0 32 32"><path d="M9 2q4 0 6 1 14 0 14 14 3 5-1 9t-9 3Q3 30 3 15 0 9 3 5q2-3 6-3z" fill="#0fa8e6"/><text x="8.500" y="24.500" font-family="Open Sans" font-weight="bold" font-size="23" fill="#fff">S</text></svg></span></button>
  <button class="tk run act" aria-label="Excel"><span><svg width="32" height="30" viewBox="0 0 32 30"><path d="M2 3l26-2v27H2z" fill="#e7f4e0" stroke="#3a9048" stroke-width="1.500"/><path d="M16 4h11v15H16z" fill="#8fcf8a"/><path d="M5 6h5l3 5 4-6h4l-6 9 6 9h-5l-3-6-4 6H4l6-9z" fill="#1f7d34"/><path d="M15 15l16 3-3 10-14-2z" fill="#fff" stroke="#8aa" stroke-width=".7"/><path d="M17 18l12 2M16 21l12 2M16 24l11 2" stroke="#4a9c56"/></svg></span></button>
  <div class="tray ms-auto d-flex align-items-center">
    <span style="margin:0 16px 6px 0">FR</span>
    <button style="margin-right:14px" aria-label="Icônes cachées"><svg width="7" height="4" viewBox="0 0 7 4"><path d="M0 4l3.500-4L7 4z" fill="#fff"/></svg></button>
    <svg class="me-2" width="15" height="15" viewBox="0 0 15 15"><path d="M1 0v15" stroke="#fff" stroke-width="2"/><path d="M3 2h5l1 2h5l-1 3 1 3H8L7 8H3z" fill="#fff"/></svg>
    <svg class="me-2" width="16" height="17" viewBox="0 0 16 17"><path d="M2 2h8v12H2z" fill="#333" stroke="#ccc"/><path d="M11 1v4M14 1v4M9 5h7v4l-2 2v4" stroke="#fff" fill="#fff"/><path d="M0 7h8v9H0z" fill="#d01818"/><path d="M2 9l4 5M6 9l-4 5" stroke="#400"/></svg>
    <svg class="me-2" width="16" height="13" viewBox="0 0 16 13"><path d="M0 10h2v3H0zM3 8h2v5H3zM6 6h2v7H6zM9 3h2v10H9zM13 0h2v13h-2z" fill="#fff"/></svg>
    <svg width="16" height="14" viewBox="0 0 16 14"><path d="M0 4h3l4-4v14l-4-4H0z" fill="#fff"/><path d="M9 4q2 3 0 6M12 2q3 5 0 10" fill="none" stroke="#fff"/></svg>
    <div class="text-center ps-2" style="width:75px;line-height:17px;font-family:Roboto">11:54<br>23.1.2014.</div>
    <button class="desk align-self-stretch" aria-label="Afficher le bureau"></button>
  </div>
</nav>

<div class="rulesdlg" role="dialog" aria-labelledby="dlgt">
  <div class="dlghead d-flex align-items-center"><span id="dlgt" class="me-auto">Gestionnaire des règles de mise en forme conditionnelle</span>
    <button class="hx q" aria-label="Aide"><svg width="9" height="12" viewBox="0 0 9 12"><path d="M1.500 3.500Q2 1 4.500 1T7.500 3.500Q7 5 5 6V8M4.500 9.500v2" fill="none" stroke="#444" stroke-width="3.500"/><path d="M1.500 3.500Q2 1 4.500 1T7.500 3.500Q7 5 5 6V8M4.500 9.500v2" fill="none" stroke="#fff" stroke-width="2"/></svg></button><button class="hx x" aria-label="Fermer"><svg width="11" height="10" viewBox="0 0 11 10"><path d="M1.500 1l8 8M9.500 1l-8 8" stroke="#633" stroke-width="4"/><path d="M1.500 1l8 8M9.500 1l-8 8" stroke="#fff" stroke-width="2.500"/></svg></button>
  </div>
  <div class="dlgbody">
    <div class="d-flex" style="height:24px">
      <label for="scope">Affi<u>c</u>her les règles de mise en forme pour :</label>
      <div class="selcbo d-flex"><select id="scope"><option>Sélection actuelle</option></select><i class="dd d-flex align-items-center justify-content-center"><i class="ar"></i></i></div>
    </div>
    <div class="rulebox">
      <div class="rbar d-flex">
        <button class="w7 f124"><svg width="16" height="15" viewBox="0 0 16 15"><path d="M.5 2.500h12v11H.5zM0 6.500h13M0 10h13M4.500 2v12M8.500 2v12" fill="#fff" stroke="#8ba3cf"/><path d="M5 7h4v3H5z" fill="#444"/><path d="M12.500-1v8M8.500 3h8M10 0l5 6M15 0l-5 6" stroke="#f2cf3c" stroke-width="1.500"/></svg><span><u>N</u>ouvelle règle...</span></button>
        <button class="w7 f124"><svg width="16" height="15" viewBox="0 0 16 15"><path d="M.5 1.500h12v11H.5zM0 5.500h13M0 9h13M4.500 1v12M8.500 1v12" fill="#fff" stroke="#8ba3cf"/><path d="M5 6h4v3H5z" fill="#444"/><path d="M15 5l-6 8-3 1 1-3 6-8z" fill="#e9b54a" stroke="#543"/></svg><span><u>M</u>odifier la règle...</span></button>
        <button class="w7 f124"><svg width="13" height="13" viewBox="0 0 13 13"><path d="M1 1l11 11M12 1L1 12" stroke="#444" stroke-width="2"/></svg><span><u>S</u>upprimer la règle</span></button>
        <button class="w7 f24 dis" aria-label="Monter"><svg width="9" height="6" viewBox="0 0 9 6"><path d="M0 6l4.500-5L9 6z" fill="#999"/></svg></button>
        <button class="w7 f24 dis" aria-label="Descendre"><svg width="9" height="6" viewBox="0 0 9 6"><path d="M0 0h9L4.500 5z" fill="#999"/></svg></button>
      </div>
      <div class="d-flex" style="height:172px">
        <div class="flex-fill"><table class="rules">
          <colgroup><col style="width:197px"><col style="width:134px"><col style="width:220px"><col></colgroup>
          <thead><tr><th>Règle (appliquée dans l'ordre indiqué)</th><th>Format</th><th>S'applique à</th><th class="border-end-0">Interrompre si Vrai</th></tr></thead>
          <tbody><tr><td class="ps-4">Formule : =A2=""</td><td><div class="sample">AaBbCcYyZz</div></td><td><div class="d-flex align-items-center"><input class="refin" aria-label="S'applique à" value="=$B$1:$B$19"><button class="refb" aria-label="Sélectionner la plage"><svg width="15" height="13" viewBox="0 0 15 13"><path d="M.5.5h14v12H.5zM0 3.500h15M0 6.500h15M0 9.500h15M5 0v13M10 0v13" fill="#fff" stroke="#4c69b5"/><path d="M4 3l6 0-1 2 4 4-2 2-4-4-2 2z" fill="#d53a2a"/></svg></button></div></td><td><input type="checkbox" class="mx-auto" aria-label="Interrompre si Vrai"></td></tr></tbody>
        </table></div>
        <div class="rscroll d-flex flex-column justify-content-between align-items-center py-2"><svg width="7" height="4" viewBox="0 0 7 4"><path d="M0 4l3.500-4L7 4z" fill="#888"/></svg><svg width="7" height="4" viewBox="0 0 7 4"><path d="M0 0h7L3.500 4z" fill="#888"/></svg></div>
      </div>
    </div>
    <div class="d-flex justify-content-end pt-1" style="gap:11px"><button class="w7 f73 def">OK</button><button class="w7 f73">Fermer</button><button class="w7 f73 dis" disabled>Appliquer</button></div>
  </div>
</div>

<script>
// Build the sheet: 20 columns, 32 visible rows, B1:B19 filled by the rule
(function(){
  var cols="ABCDEFGHIJKLMNOPQRS".split("");cols.push("");
  var h='<colgroup><col style="width:26px"></colgroup><thead><tr><th><svg width="11" height="11" viewBox="0 0 11 11" style="margin:4px 0 0 11px"><path d="M11 0v11H0z" fill="#b5b9c0"/></svg></th>';
  cols.forEach(function(c){h+='<th'+(c==="B"?' class="act"':'')+'>'+c+'</th>'});
  h+='</tr></thead><tbody>';
  for(var r=1;r<=32;r++){
    h+='<tr><th'+(r===10?' class="act"':'')+'>'+r+'</th>';
    cols.forEach(function(c){h+='<td'+(c==="B"&&r<20?' class="red'+(r===10?' cur':'')+'"':'')+'></td>'});
    h+='</tr>';
  }
  document.getElementById("cells").innerHTML=h+'</tbody>';
  // blurred browser tabs behind the glass title bar
  var g=["#d5cdc8","#cfc8c4","#4f8ab8","#6f8ec4","#b8b0b0","#d98c86","#4e9a58","#9cb4d0","#7d97cc","#b0b4cc","#dba8a8","#dc7a7a","#c85a5e","#d4a8ae","#cc5d5d","#c98a8a","#e8b83f"],s="";
  g.forEach(function(c){s+='<i style="--c:'+c+'"></i>'});
  document.getElementById("ghosts").innerHTML=s;
})();
</script>
<script src="https://cdn.jsdelivr.net/npm/bootstrap@5.3.0/dist/js/bootstrap.bundle.min.js"></script>
</body>
</html>
